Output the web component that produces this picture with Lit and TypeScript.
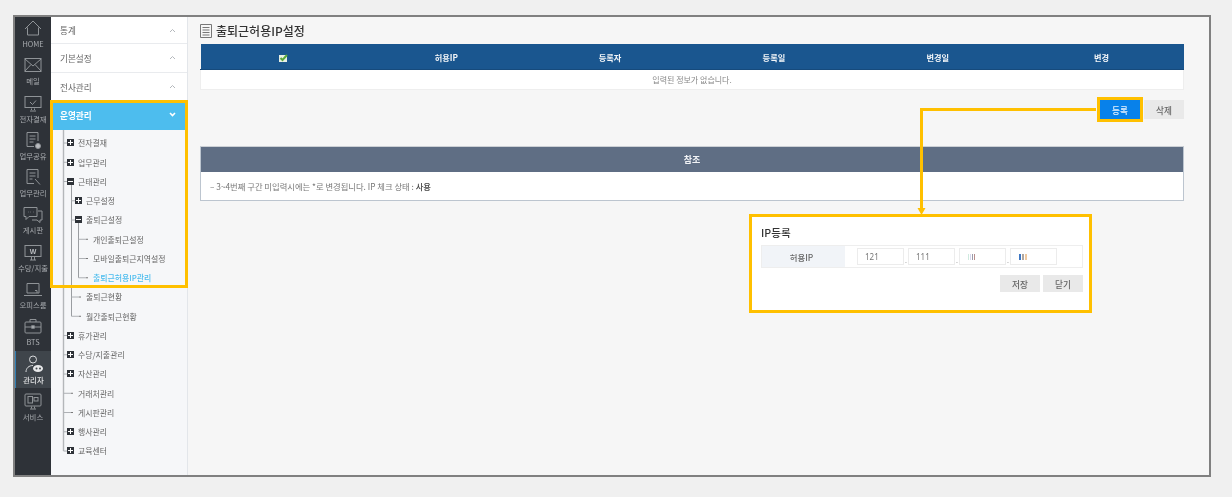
import { LitElement, html, css, svg } from "lit";
import { customElement } from "lit/decorators.js";

const railIcons: Record<string, unknown> = {
  home: svg`<path d="M4 10 12 2l8 8M6.5 8.5V16h11V8.500"/>`,
  mail: svg`<rect x="4" y="2.500" width="16" height="13"/><path d="M4 3l8 7 8-7M4 15l6-6.500M20 15l-6-6.500"/>`,
  sign: svg`<rect x="4" y="2.500" width="16" height="11"/><path d="M9 8l2.500 2.500L15 6.500M9 17h6"/><path d="M10.500 14.500v1.500M13.500 14.500v1.500"/>`,
  share: svg`<path d="M17 10V1.500H6V15.500h7M8.500 5h6M8.500 8h6M8.500 11h4"/><circle cx="17" cy="15" r="2.500" fill="#b9bcc0"/>`,
  work: svg`<path d="M17 10V1.500H6V15.500h7M8.500 5h6M8.500 8h6M8.500 11h3"/><path d="M14 11l5 5.500"/>`,
  board: svg`<path d="M3 2.500h13v9H8l-3 3v-3H3z"/><path d="M17 6h4v9h-2v2.500l-3-2.500h-5"/><path d="M7 7h.5M9.500 7h.5M12 7h.5"/>`,
  pay: svg`<rect x="4" y="2.500" width="16" height="11"/><path d="M9 17h6M10.500 14v3M13.500 14v3"/><text x="12" y="11" text-anchor="middle" font-size="7" font-weight="700" stroke="none" fill="#b9bcc0" font-family="Liberation Sans, sans-serif">W</text>`,
  office: svg`<path d="M6 3.500h12v9.500H6zM3 15.500h18"/><path d="M14 10.500h2v2.500"/>`,
  bts: svg`<rect x="4" y="5" width="16" height="11" rx="1"/><path d="M9 5V2.500h6V5M4 10h16"/><rect x="10.800" y="8.800" width="2.400" height="2.400" fill="#b9bcc0"/>`,
  admin: svg`<circle cx="11" cy="4.500" r="3.500"/><path d="M4 17c0-4 3-6.500 7-6.500"/><ellipse cx="16" cy="13.500" rx="5" ry="3.500" fill="#e8e9ea" stroke="none"/><circle cx="14.500" cy="13.500" r="1" fill="#3f454b" stroke="none"/><circle cx="18" cy="13.500" r="1" fill="#3f454b" stroke="none"/>`,
  service: svg`<rect x="4" y="2" width="16" height="12" rx="1"/><rect x="7" y="4.500" width="4.500" height="6.500"/><rect x="13" y="5.500" width="4" height="3.500"/><path d="M9 17h6"/><path d="M10.500 14.500v2M13.500 14.500v2"/>`,
};

const rail = [
  ["home", "HOME"], ["mail", "메일"], ["sign", "전자결재"], ["share", "업무공유"], ["work", "업무관리"],
  ["board", "게시판"], ["pay", "수당/지출"], ["office", "오피스룸"], ["bts", "BTS"], ["admin", "관리자"], ["service", "서비스"],
];

type Node = { t: string; d: number; k: "plus" | "minus" | "leaf"; on?: boolean };
const tree: Node[] = [
  { t: "전자결재", d: 0, k: "plus" },
  { t: "업무관리", d: 0, k: "plus" },
  { t: "근태관리", d: 0, k: "minus" },
  { t: "근무설정", d: 1, k: "plus" },
  { t: "출퇴근설정", d: 1, k: "minus" },
  { t: "개인출퇴근설정", d: 2, k: "leaf" },
  { t: "모바일출퇴근지역설정", d: 2, k: "leaf" },
  { t: "출퇴근허용IP관리", d: 2, k: "leaf", on: true },
  { t: "출퇴근현황", d: 1, k: "leaf" },
  { t: "월간출퇴근현황", d: 1, k: "leaf" },
  { t: "휴가관리", d: 0, k: "plus" },
  { t: "수당/지출관리", d: 0, k: "plus" },
  { t: "자산관리", d: 0, k: "plus" },
  { t: "거래처관리", d: 0, k: "leaf" },
  { t: "게시판관리", d: 0, k: "leaf" },
  { t: "행사관리", d: 0, k: "plus" },
  { t: "교육센터", d: 0, k: "plus" },
];

const ROW = 19.25;
const TOP = 3.4;
const cy = (i: number) => TOP + ROW * i + ROW / 2;

@customElement("app-root")
export class AppRoot extends LitElement {
  static styles = css`
    :host {
      display: block;
      position: relative;
      width: 1232px;
      height: 497px;
      box-sizing: border-box;
      padding: 15px 21px 20px 13px;
      background: #f0f0f0;
      font-family: "Noto Sans CJK KR", "Noto Sans", sans-serif;
      overflow: hidden;
    }
    .frame {
      display: flex;
      height: 100%;
      box-sizing: border-box;
      border: 2px solid #808080;
      background: #f6f6f6;
      overflow: hidden;
      filter: blur(0.3px);
    }
    .rail {
      width: 36px;
      flex: none;
      background: #2e3238;
      display: flex;
      flex-direction: column;
      margin-top: -2px;
    }
    .rail-item {
      height: 37.3px;
      flex: none;
      box-sizing: border-box;
      padding-top: 4px;
      display: flex;
      flex-direction: column;
      align-items: center;
      color: #a9acb0;
      font-size: 7.4px;
      line-height: 10px;
      white-space: nowrap;
    }
    .rail-item svg {
      width: 24px;
      height: 19px;
      flex: none;
      fill: none;
      stroke: #8f9397;
      stroke-width: 1;
    }
    .rail-item span { margin-top: 1px; }
    .rail-item.active {
      background: #3f454b;
      border-left: 1px solid #2f7fb5;
      color: #e4e5e6;
      font-weight: 500;
    }
    .rail-item.active svg { stroke: #d8dadc; }
    .menu {
      width: 136px;
      flex: none;
      background: #f6f7f9;
      border-right: 1px solid #e3e6ea;
      display: flex;
      flex-direction: column;
    }
    .sec {
      height: 28.6px;
      flex: none;
      box-sizing: border-box;
      background: #fff;
      border-bottom: 1.5px solid #e9ebee;
      display: flex;
      align-items: center;
      justify-content: space-between;
      padding: 0 11px 0 9px;
      color: #666;
      font-size: 8.6px;
    }
    .sec:first-child { height: 27.2px; }
    .sec svg { width: 7px; height: 5px; fill: none; stroke: #b4b8bc; stroke-width: 1; }
    .sec.open {
      background: #4dbdee;
      color: #fff;
      font-weight: 700;
      border: 0;
      padding-bottom: 2px;
    }
    .sec.open svg { stroke: #fff; stroke-width: 1.6; }
    .tree {
      position: relative;
      flex: 1;
      padding-top: 3.400px;
    }
    .guides { position: absolute; left: 0; top: 0; width: 136px; height: 330px; }
    .row {
      height: 19.25px;
      display: flex;
      align-items: center;
      color: #666;
      font-size: 7.9px;
      white-space: nowrap;
      position: relative;
    }
    .row.d0 { padding-left: 16px; }
    .row.d1 { padding-left: 24px; }
    .row.d2 { padding-left: 42px; }
    .row.on { color: #4dbdee; font-weight: 500; }
    .leaf0 { padding-left: 27px !important; }
    .leaf1 { padding-left: 35px !important; }
    .ex {
      width: 7px;
      height: 7px;
      flex: none;
      margin-right: 4px;
      background: #2e3238;
      display: flex;
      align-items: center;
      justify-content: center;
    }
    .ex svg { width: 5px; height: 5px; stroke: #fff; stroke-width: 1; fill: none; }
    .main {
      flex: 1;
      min-width: 0;
      box-sizing: border-box;
      padding: 0 25px 0 12px;
      display: flex;
      flex-direction: column;
    }
    .title {
      height: 27px;
      flex: none;
      display: flex;
      align-items: center;
      gap: 4px;
      color: #333;
      font-size: 12px;
      font-weight: 500;
    }
    .title svg { width: 12px; height: 14px; fill: #f6f6f6; stroke: #777; stroke-width: 1; }
    table { border-collapse: collapse; table-layout: fixed; width: 984px; }
    th {
      height: 25px;
      padding: 0;
      background: #1a568f;
      color: #f2f5f8;
      font-size: 8.2px;
      font-weight: 700;
      border-bottom: 1px solid #164a7c;
    }
    th svg { width: 9px; height: 8px; vertical-align: middle; margin-left: 2px; }
    td.empty {
      height: 19px;
      padding: 0;
      background: #fff;
      border: 1px solid #eeeeee;
      border-top: 0;
      text-align: center;
      color: #888;
      font-size: 8px;
    }
    .actions {
      display: flex;
      justify-content: flex-end;
      gap: 4px;
      margin-top: 10px;
    }
    .btn {
      width: 40px;
      height: 19px;
      display: flex;
      align-items: center;
      justify-content: center;
      background: #e9e9e9;
      color: #666;
      font-size: 8.6px;
      font-weight: 500;
    }
    .btn.primary {
      background: #0881ea;
      color: #e6f2fd;
      outline: 3px solid #ffc000;
    }
    .ref {
      margin-top: 27px;
      box-sizing: border-box;
      height: 55px;
      border: 1px solid #bcc5cf;
      border-top-color: #ccd0d5;
      background: #fff;
      display: flex;
      flex-direction: column;
    }
    .ref-head {
      height: 25px;
      flex: none;
      background: #5f6e84;
      color: #f0f2f5;
      font-size: 9px;
      font-weight: 700;
      display: flex;
      align-items: center;
      justify-content: center;
    }
    .ref-body {
      flex: 1;
      display: flex;
      align-items: center;
      padding-left: 9px;
      color: #777;
      font-size: 8.3px;
      white-space: pre;
    }
    .ref-body b { color: #444; font-weight: 500; }
    .connector { position: absolute; left: 915px; top: 100px; width: 190px; height: 120px; pointer-events: none; }
    .outline { position: absolute; left: 50px; top: 100px; width: 138px; height: 188px; pointer-events: none; }
    .popup {
      position: absolute;
      left: 749px;
      top: 214px;
      width: 343px;
      height: 99px;
      box-sizing: border-box;
      background: #fff;
      border: 3px solid #ffc000;
      padding: 7px 6px 0 9px;
      filter: blur(0.3px);
    }
    .popup h3 {
      margin: 0;
      height: 18px;
      line-height: 18px;
      color: #333;
      font-size: 10.6px;
      font-weight: 500;
    }
    .form {
      display: flex;
      height: 23px;
      margin-top: 3px;
      box-sizing: border-box;
      border: 1px solid #eeeeee;
    }
    .form .lab {
      width: 83px;
      flex: none;
      box-sizing: border-box;
      background: #f1f4f8;
      color: #666;
      font-size: 8.4px;
      font-weight: 500;
      display: flex;
      align-items: center;
      justify-content: center;
      padding-right: 4px;
    }
    .fields {
      display: flex;
      align-items: center;
      padding-left: 12px;
      gap: 0;
    }
    .ip {
      width: 47px;
      height: 17px;
      box-sizing: border-box;
      border: 1px solid #ececec;
      display: flex;
      align-items: center;
      padding-left: 7px;
      color: #777;
      font-size: 8px;
      font-family: "Noto Sans", sans-serif;
    }
    .dot {
      width: 4px;
      text-align: center;
      color: #888;
      font-size: 7px;
      line-height: 8px;
      align-self: flex-end;
      margin-bottom: 3px;
    }
    .blot { display: flex; gap: 1px; height: 6px; margin-left: 1px; }
    .blot i { display: block; height: 100%; }
    .c1 { width: 1px; background: #cfeadf; }
    .c2 { width: 1px; background: #d8d8ef; }
    .c3 { width: 1px; background: #9a9aa8; }
    .c4 { width: 1px; background: #b88f8f; }
    .d1c { width: 2px; background: #3f78c4; }
    .d2c { width: 2px; background: #b0a7a0; }
    .d3c { width: 2px; background: #f0c9a0; }
    .form-actions {
      display: flex;
      justify-content: flex-end;
      gap: 3px;
      margin-top: 7px;
    }
    .form-actions .btn { height: 17px; }
  `;

  private guides() {
    const h: unknown[] = [];
    const line = (x1: number, y1: number, x2: number, y2: number, c = "#adb0b4", w = 1) =>
      svg`<line x1=${x1} y1=${y1} x2=${x2} y2=${y2} stroke=${c} stroke-width=${w} />`;
    h.push(line(12.5, 0, 12.5, cy(16), "#b4b7ba", 1.4));
    h.push(line(20.500, cy(2) + 3, 20.500, cy(9), "#9a9da1"));
    h.push(line(27.500, cy(4) + 3, 27.500, cy(7), "#9a9da1"));
    tree.forEach((n, i) => {
      const y = cy(i);
      if (n.d === 0) {
        h.push(line(12.5, y, n.k === "leaf" ? 20 : 16, y));
        if (n.k === "leaf") h.push(line(20, y, 22, y, "#777"));
      } else if (n.d === 1) {
        h.push(line(20.500, y, n.k === "leaf" ? 28 : 24, y));
        if (n.k === "leaf") h.push(line(28, y, 30, y, "#777"));
      } else {
        h.push(line(27.500, y, 35, y));
        h.push(line(35, y, 37, y, "#777"));
      }
    });
    return h;
  }

  render() {
    return html`
      <div class="frame">
        <nav class="rail">
          ${rail.map(([ic, label]) => html`
            <div class="rail-item ${ic === "admin" ? "active" : ""}">
              <svg viewBox="0 0 24 19">${railIcons[ic]}</svg>
              <span>${label}</span>
            </div>`)}
        </nav>
        <aside class="menu">
          ${["통계", "기본설정", "전사관리"].map((t) => html`
            <div class="sec">${t}<svg viewBox="0 0 7 5"><path d="M1 4l2.500-2.500L6 4" /></svg></div>`)}
          <div class="sec open">운영관리<svg viewBox="0 0 7 5"><path d="M1 1l2.500 2.500L6 1" /></svg></div>
          <div class="tree">
            <svg class="guides" viewBox="0 0 136 330">${this.guides()}</svg>
            ${tree.map((n) => html`
              <div class="row d${n.d} ${n.on ? "on" : ""} ${n.k === "leaf" && n.d < 2 ? `leaf${n.d}` : ""}">
                ${n.k !== "leaf"
                  ? html`<span class="ex"><svg viewBox="0 0 5 5"><path d=${n.k === "plus" ? "M0 2.500h5M2.500 0v5" : "M0 2.500h5"} /></svg></span>`
                  : ""}
                ${n.t}
              </div>`)}
          </div>
        </aside>
        <main class="main">
          <div class="title">
            <svg viewBox="0 0 12 14"><path d="M.5.500h11v13H.5zM2.500 3.500h7M2.500 6h7M2.500 8.500h7M2.500 11h7" /></svg>
            출퇴근허용IP설정
          </div>
          <table>
            <thead>
              <tr>
                <th><svg viewBox="0 0 9 8"><rect y="1" width="8" height="7" fill="#e8f0e4" /><path d="M1.500 4l2 2L8 1" fill="none" stroke="#5aa83c" stroke-width="2" /></svg></th>
                <th>허용IP</th><th>등록자</th><th>등록일</th><th>변경일</th><th>변경</th>
              </tr>
            </thead>
            <tbody><tr><td class="empty" colspan="6">입력된 정보가 없습니다.</td></tr></tbody>
          </table>
          <div class="actions">
            <div class="btn primary">등록</div>
            <div class="btn">삭제</div>
          </div>
          <section class="ref">
            <div class="ref-head">참조</div>
            <div class="ref-body">– 3~4번째 구간 미입력시에는 *로 변경됩니다. IP 체크 상태 : <b>사용</b></div>
          </section>
        </main>
      </div>
      <svg class="connector" viewBox="0 0 190 120">
        <path d="M181 9.500H6.500V110" fill="none" stroke="#ffc000" stroke-width="3" />
        <path d="M2.500 108h8l-4 7z" fill="#ffc000" />
      </svg>
      <svg class="outline" viewBox="0 0 138 188">
        <rect x="1.500" y="1.500" width="135" height="185" fill="none" stroke="#ffc000" stroke-width="3" />
      </svg>
      <div class="popup">
        <h3>IP등록</h3>
        <div class="form">
          <div class="lab">허용IP</div>
          <div class="fields">
            <div class="ip">121</div><span class="dot">.</span>
            <div class="ip">111</div><span class="dot">.</span>
            <div class="ip"><span class="blot"><i class="c1"></i><i class="c2"></i><i class="c3"></i><i class="c4"></i></span></div><span class="dot">.</span>
            <div class="ip"><span class="blot"><i class="d1c"></i><i class="d2c"></i><i class="d3c"></i></span></div>
          </div>
        </div>
        <div class="form-actions">
          <div class="btn">저장</div>
          <div class="btn">닫기</div>
        </div>
      </div>
    `;
  }
}
